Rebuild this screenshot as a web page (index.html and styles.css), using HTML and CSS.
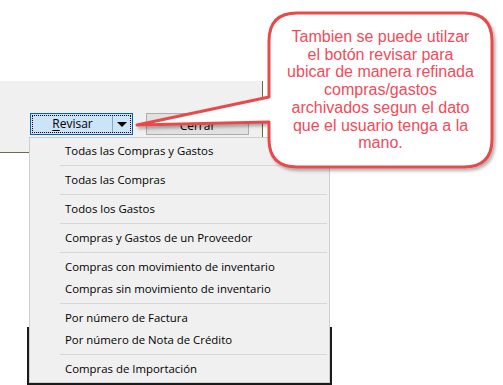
FILE: index.html
```html
<!DOCTYPE html>
<html>
<head>
  <title>Revisar compras</title>
  <link rel="stylesheet" href="styles.css">
</head>
<body>
  <div class="app">
    <div class="blank"></div>

    <div class="window">
      <div class="button-row">
        <div class="split-button">
          <div class="focus-rect">
            <span class="split-main"><u>R</u>evisar</span>
            <span class="split-arrow"><span class="caret"></span></span>
          </div>
        </div>
        <div class="button">Cerrar</div>
      </div>
    </div>

    <div class="panel"></div>
  </div>

  <div class="menu-backdrop"></div>
  <div class="menu">
    <div class="menu-item">Todas las Compras y Gastos</div>
    <div class="menu-sep"></div>
    <div class="menu-item">Todas las Compras</div>
    <div class="menu-sep"></div>
    <div class="menu-item">Todos los Gastos</div>
    <div class="menu-sep"></div>
    <div class="menu-item">Compras y Gastos de un Proveedor</div>
    <div class="menu-sep"></div>
    <div class="menu-item">Compras con movimiento de inventario</div>
    <div class="menu-item">Compras sin movimiento de inventario</div>
    <div class="menu-sep"></div>
    <div class="menu-item">Por número de Factura</div>
    <div class="menu-item">Por número de Nota de Crédito</div>
    <div class="menu-sep"></div>
    <div class="menu-item">Compras de Importación</div>
  </div>

  <div class="callout">
    <svg class="callout-shape" width="503" height="185" viewBox="0 0 503 185">
      <defs>
        <filter id="shadow" x="-10%" y="-10%" width="130%" height="130%">
          <feDropShadow dx="2" dy="2.5" stdDeviation="1.8" flood-color="#000" flood-opacity="0.3"/>
        </filter>
      </defs>
      <path d="M297 13 H464 Q492 13 492 41 V139 Q492 167 464 167 H297 Q269 167 269 139 V122 L137 125 L269 97 V41 Q269 13 297 13 Z"
            fill="#fff" stroke="#e84a4a" stroke-width="3" stroke-linejoin="round" filter="url(#shadow)"/>
    </svg>
    <div class="callout-text">
      Tambien se puede utilzar<br>
      el botón revisar para<br>
      ubicar de manera refinada<br>
      compras/gastos<br>
      archivados segun el dato<br>
      que el usuario tenga a la<br>
      mano.
    </div>
  </div>
</body>
</html>
```

FILE: styles.css
```css
body {
  margin: 0;
  padding: 0;
  width: 503px;
  height: 385px;
  overflow: hidden;
  position: relative;
  background-color: #fff;
  font-family: "Open Sans", "Noto Sans", sans-serif;
  font-size: 11.4px;
  color: #000;
}

.app {
  display: flex;
  flex-direction: column;
  height: 100%;
}

.blank {
  height: 81px;
}

.window {
  width: 263px;
  height: 71px;
  background-color: #f0f0f0;
  border-right: 1px solid #66663f;
  box-sizing: border-box;
  padding: 32px 0 0 30px;
}

.button-row {
  display: flex;
  gap: 13px;
}

.split-button {
  width: 103px;
  height: 22px;
  box-sizing: border-box;
  border: 1px solid #0063b1;
  background-color: #cce4f7;
  padding: 1px;
}

.focus-rect {
  display: flex;
  height: 100%;
  box-sizing: border-box;
  border: 1px dotted #000;
}

.split-main {
  flex: 1;
  display: flex;
  align-items: center;
  justify-content: center;
  line-height: 1;
  font-size: 12px;
}

.split-main u {
  text-underline-offset: 2px;
}

.split-arrow {
  width: 17px;
  border-left: 1px solid #8aa7c0;
  display: flex;
  align-items: center;
  justify-content: center;
}

.caret {
  width: 0;
  height: 0;
  border-left: 5px solid transparent;
  border-right: 5px solid transparent;
  border-top: 5px solid #000;
}

.button {
  width: 103px;
  height: 22px;
  box-sizing: border-box;
  border: 1px solid #adadad;
  background-color: #e1e1e1;
  display: flex;
  align-items: center;
  justify-content: center;
  padding-top: 3px;
  font-size: 12px;
}

.panel {
  flex: 1;
  width: 263px;
  border-top: 1px solid #6b6c43;
}

.menu-backdrop {
  position: absolute;
  left: 27px;
  top: 327px;
  width: 305px;
  height: 58px;
  background-color: #1b1b1b;
}

.menu {
  position: absolute;
  left: 29px;
  top: 137px;
  width: 301px;
  box-sizing: border-box;
  padding: 2px;
  background-color: #f0f0f0;
  border: 1px solid #cfcfcf;
}

.menu-item {
  height: 22px;
  line-height: 22px;
  padding-left: 33px;
  white-space: nowrap;
}

.menu-sep {
  height: 7px;
  margin-left: 28px;
  display: flex;
  align-items: center;
}

.menu-sep::before {
  content: "";
  flex: 1;
  height: 1px;
  background-color: #d7d7d7;
}

.callout {
  position: absolute;
  left: 0;
  top: 0;
  width: 503px;
  height: 185px;
}

.callout-shape {
  position: absolute;
  left: 0;
  top: 0;
}

.callout-text {
  position: absolute;
  left: 270px;
  top: 28px;
  width: 221px;
  text-align: center;
  font-family: "Liberation Sans", Arial, sans-serif;
  font-size: 16px;
  line-height: 17.7px;
  color: #f24a5a;
  white-space: nowrap;
}
```
